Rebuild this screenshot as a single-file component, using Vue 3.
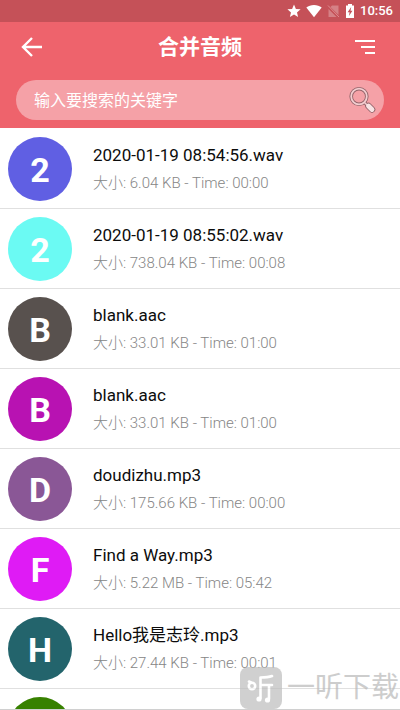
<script setup>
import { ref } from 'vue'

const keyword = ref('')
const files = [
  { id: 1, letter: '2', tone: 'indigo', name: '2020-01-19 08:54:56.wav', size: '6.04 KB', time: '00:00' },
  { id: 2, letter: '2', tone: 'aqua', name: '2020-01-19 08:55:02.wav', size: '738.04 KB', time: '00:08' },
  { id: 3, letter: 'B', tone: 'stone', name: 'blank.aac', size: '33.01 KB', time: '01:00' },
  { id: 4, letter: 'B', tone: 'purple', name: 'blank.aac', size: '33.01 KB', time: '01:00' },
  { id: 5, letter: 'D', tone: 'plum', name: 'doudizhu.mp3', size: '175.66 KB', time: '00:00' },
  { id: 6, letter: 'F', tone: 'magenta', name: 'Find a Way.mp3', size: '5.22 MB', time: '05:42' },
  { id: 7, letter: 'H', tone: 'teal', name: 'Hello我是志玲.mp3', size: '27.44 KB', time: '00:01' },
  { id: 8, letter: '', tone: 'green', name: '', size: '', time: '' }
]
</script>

<template>
  <div class="screen">
    <div class="status">
      <svg width="14" height="14" viewBox="0 0 14 14" fill="#fff"><path d="M7 .6l1.900 4.300 4.700.4-3.600 3.100 1.100 4.600L7 10.600 2.900 13 4 8.400.4 5.300l4.700-.4z" /></svg>
      <svg width="16" height="14" viewBox="0 0 16 14" fill="#fff"><path d="M8 13.200L.3 3.600C2.400 2 5 1 8 1s5.600 1 7.700 2.600z" /></svg>
      <svg width="13" height="14" viewBox="0 0 13 14"><path d="M5 1.500h6.500v9.500L3.500 3zM1.500 5l8 8h-8z" fill="#fff" opacity=".28" /><path d="M1 1.500l11 11.500" stroke="#e9a3a8" stroke-width="1" opacity=".7" /></svg>
      <svg width="10" height="14" viewBox="0 0 10 14"><path d="M3 0h4v1.500h2V14H1V1.500h2z" fill="#fff" /><path d="M6.200 3L2.600 8.300h2L3.900 12l3.600-5.300h-2z" fill="#c55158" /></svg>
      <span class="clock">10:56</span>
    </div>

    <header class="header">
      <div class="toolbar">
        <button class="tool" type="button" aria-label="返回">
          <svg width="22" height="20" viewBox="0 0 22 20" fill="none" stroke="#fff" stroke-width="2.400"><path d="M12 1L3 10l9 9M3 10h19" /></svg>
        </button>
        <h1>合并音频</h1>
        <button class="tool end" type="button" aria-label="排序">
          <svg width="20" height="16" viewBox="0 0 20 16" fill="none" stroke="#fff" stroke-width="2"><path d="M0 2h20M6 8h14M10 14h10" /></svg>
        </button>
      </div>
      <form class="search" @submit.prevent>
        <input v-model="keyword" type="text" aria-label="搜索" placeholder="输入要搜索的关键字" />
        <button class="go" type="submit" aria-label="搜索">
          <svg width="28" height="28" viewBox="0 0 28 28" fill="none">
            <path d="M15.500 16.500l5 5" stroke="#93646a" stroke-width="3.400" stroke-linecap="round" />
            <path d="M19.500 20l3.500 3.500" stroke="#93646a" stroke-width="6.500" stroke-linecap="round" />
            <circle cx="10" cy="10.500" r="7.800" stroke="#93646a" stroke-width="3.600" />
            <circle cx="10" cy="10.500" r="7.800" stroke="#f3cdd0" stroke-width="1.800" />
            <path d="M15.500 16.500l4 4" stroke="#f3cdd0" stroke-width="1.600" />
            <path d="M19.500 20l3.500 3.500" stroke="#f8e3e4" stroke-width="4.800" stroke-linecap="round" />
          </svg>
        </button>
      </form>
    </header>

    <ul class="list">
      <li v-for="f in files" :key="f.id" class="row">
        <span class="avatar" :class="f.tone">{{ f.letter }}</span>
        <div v-if="f.name" class="info">
          <span class="name">{{ f.name }}</span>
          <span class="meta">大小: {{ f.size }} - Time: {{ f.time }}</span>
        </div>
      </li>
    </ul>

    <div class="mark">
      <svg width="42" height="42" viewBox="0 0 42 42" fill="none">
        <rect width="42" height="42" rx="8" fill="#bdbdbd" />
        <g stroke="#fff" stroke-width="2.600" stroke-linecap="round" stroke-linejoin="round">
          <circle cx="12" cy="19" r="3.200" />
          <path d="M9 14.500l2 1M32 9c-4 1.500-7 1.500-11.500 1.500V31M20.500 18H32M29 18v14" />
        </g>
        <circle cx="19" cy="32" r="2.600" fill="#fff" />
        <circle cx="27.500" cy="33" r="2.600" fill="#fff" />
      </svg>
      <span>一听下载</span>
    </div>
  </div>
</template>

<style>
body {
  margin: 0;
}
</style>

<style scoped>
.screen {
  position: relative;
  display: flex;
  flex-direction: column;
  box-sizing: border-box;
  height: 100vh;
  overflow: hidden;
  border-bottom: 1px solid #d0d0d0;
  background: #fff;
  font-family: Roboto, "Noto Sans CJK SC", sans-serif;
}
.status {
  flex: none;
  display: flex;
  align-items: center;
  justify-content: flex-end;
  gap: 5px;
  height: 22px;
  padding-right: 7px;
  background: #c55158;
}
.clock {
  color: #fff;
  font-size: 13px;
  font-weight: 500;
  line-height: 22px;
}
.header {
  flex: none;
  padding: 0 16px 8px;
  background: #ee636c;
}
.toolbar {
  display: grid;
  grid-template-columns: 48px 1fr 48px;
  align-items: center;
  height: 50px;
  margin-bottom: 8px;
}
h1 {
  margin: 0;
  color: #fff;
  font-size: 21px;
  font-weight: 700;
  line-height: 30px;
  text-align: center;
}
button {
  display: flex;
  padding: 0;
  border: 0;
  background: none;
}
.tool {
  padding: 4px;
}
.end {
  justify-self: end;
  padding-right: 9px;
}
.search {
  display: flex;
  align-items: center;
  height: 40px;
  padding: 0 7px 0 18px;
  border-radius: 20px;
  background: #f5a1a7;
}
input {
  flex: 1;
  min-width: 0;
  padding: 2px 0 0;
  border: 0;
  outline: 0;
  background: none;
  color: #fff;
  font-family: inherit;
  font-size: 16px;
  line-height: 24px;
}
input::placeholder {
  color: #fff;
  opacity: 1;
}
.list {
  flex: 1;
  min-height: 0;
  overflow: hidden;
  margin: 0;
  padding: 1px 0 0;
  list-style: none;
}
.row {
  display: flex;
  align-items: center;
  gap: 21px;
  box-sizing: border-box;
  height: 80px;
  padding: 0 8px;
  border-bottom: 1px solid #e0e0e0;
}
.avatar {
  flex: none;
  width: 64px;
  height: 64px;
  border-radius: 50%;
  color: #fff;
  font-size: 34px;
  font-weight: 700;
  line-height: 66px;
  text-align: center;
}
.indigo { background: #605fe3; }
.aqua { background: #6bfaf3; }
.stone { background: #58514e; }
.purple { background: #b812b2; }
.plum { background: #8a5796; }
.magenta { background: #df1bf5; }
.teal { background: #23646c; }
.green { background: #378100; }
.info {
  display: flex;
  flex-direction: column;
  gap: 6px;
  min-width: 0;
  padding-bottom: 2px;
}
.name {
  color: #0c0c0c;
  font-size: 17px;
  line-height: 24px;
  white-space: nowrap;
}
.meta {
  color: #868686;
  font-size: 15px;
  font-weight: 300;
  line-height: 20px;
  white-space: nowrap;
}
.mark {
  position: absolute;
  right: 1px;
  bottom: 0;
  display: flex;
  align-items: center;
  gap: 5px;
  color: #b8b8b8;
  font-size: 28px;
  font-weight: 400;
  line-height: 42px;
  opacity: 0.7;
}
</style>
